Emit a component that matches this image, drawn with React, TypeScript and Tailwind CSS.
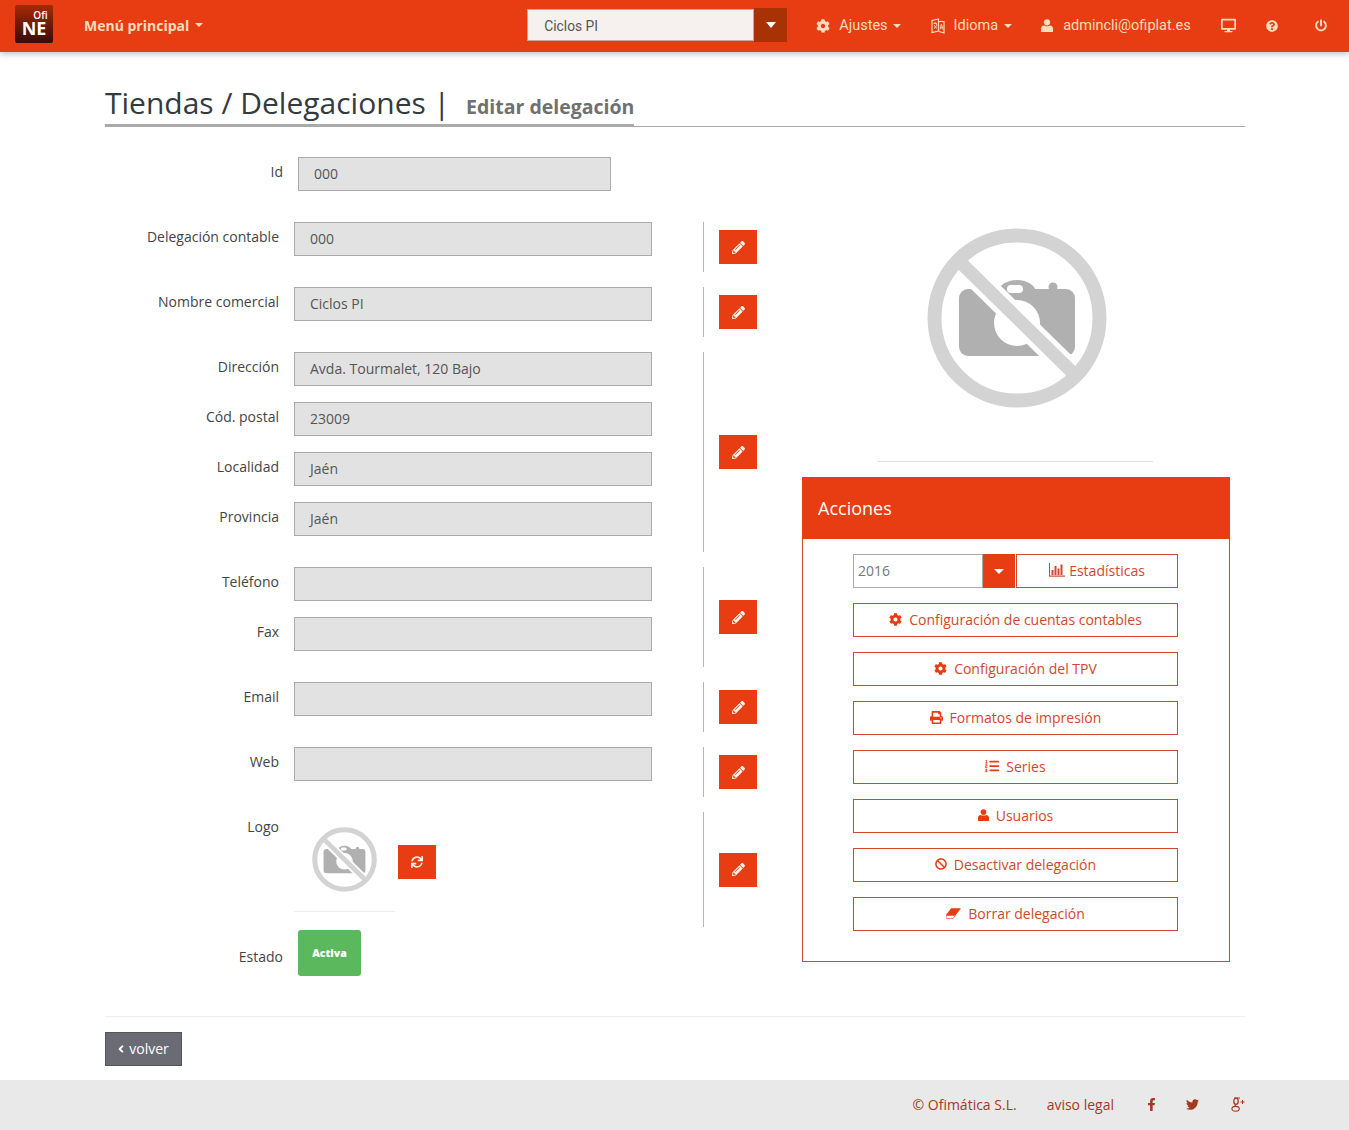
import React from 'react';
import {
  FaAngleLeft,
  FaBan,
  FaCog,
  FaDesktop,
  FaFacebookF,
  FaListOl,
  FaPencilAlt,
  FaPowerOff,
  FaPrint,
  FaQuestionCircle,
  FaSync,
  FaTwitter,
} from 'react-icons/fa';

// Imagen de "sin foto" usada en la ficha y en el logo
const NoPhoto = ({ className }: { className: string }) => (
  <svg viewBox="0 0 180 180" className={className}>
    <rect x="32" y="61" width="116" height="67" rx="9" fill="#b0b0b0" />
    <ellipse cx="90" cy="65" rx="19" ry="13" fill="#b0b0b0" />
    <circle cx="126" cy="59" r="4.5" fill="#b0b0b0" />
    <rect x="80" y="57" width="16" height="8" rx="4" fill="#ffffff" />
    <circle cx="90" cy="95" r="23" fill="#ffffff" />
    <line x1="32" y1="33" x2="147" y2="146" stroke="#ffffff" strokeWidth="23" />
    <line x1="32" y1="33" x2="147" y2="146" stroke="#d3d3d3" strokeWidth="13" />
    <circle cx="90" cy="90" r="82.5" fill="none" stroke="#d3d3d3" strokeWidth="14" />
  </svg>
);

const BarsIcon = () => (
  <svg viewBox="0 0 16 14" className="w-4 h-[14px]" fill="currentColor">
    <rect x="0" y="0" width="1" height="13" />
    <rect x="0" y="12.5" width="16" height="1.2" />
    <rect x="2.5" y="7" width="2" height="5" />
    <rect x="5.5" y="3" width="2" height="9" />
    <rect x="8.5" y="5.5" width="2" height="6.5" />
    <rect x="11.5" y="1.5" width="2" height="10.5" />
  </svg>
);

const UserIcon = ({ className }: { className: string }) => (
  <svg viewBox="0 0 12 13" className={className} fill="currentColor">
    <circle cx="6" cy="3.3" r="3.1" />
    <path d="M0 13V9.6C0 7.8 1.2 6.7 3 6.4C4 7.4 8 7.4 9 6.4C10.8 6.7 12 7.8 12 9.6V13Z" />
  </svg>
);

const EraserIcon = ({ className }: { className: string }) => (
  <svg viewBox="0 0 16 11" className={className} fill="currentColor">
    <path d="M5.5 0H16L10.5 7H0Z" />
    <path d="M0 7.6H10.2L7.4 11H1.2L0 10Z" fill="none" stroke="currentColor" strokeWidth="0.8" />
  </svg>
);

const LanguageIcon = ({ className }: { className: string }) => (
  <svg viewBox="0 0 14 16" className={className} fill="none" stroke="currentColor" strokeWidth="1.2">
    <path d="M1 2.5L7.5 1V13L1 14.5Z" />
    <path d="M7.5 3.5H13V15L8 13.5" />
    <path d="M2.5 5.5H6M4.2 4V6M3 10.5C4.5 9.5 5.5 8 5.8 6M3.2 7C3.8 8.5 4.8 9.8 6 10.4M9 11.5L10.4 6L12 11.5M9.6 9.8H11.4" strokeWidth="0.9" />
  </svg>
);

const GooglePlusIcon = ({ className }: { className: string }) => (
  <svg viewBox="0 0 15 15" className={className} fill="none" stroke="currentColor">
    <ellipse cx="5" cy="4.3" rx="2.2" ry="3.1" strokeWidth="1.3" />
    <ellipse cx="4.6" cy="11.8" rx="3.7" ry="2.4" strokeWidth="1.1" />
    <path d="M4 7.4C3.6 8.4 4.4 8.8 5 9.4M3 1H9" strokeWidth="1.1" />
    <path d="M11.5 3V7M9.5 5H13.5" strokeWidth="1" />
  </svg>
);

const Caret = ({ className }: { className: string }) => (
  <span className={`inline-block w-0 h-0 border-x-[4px] border-x-transparent border-t-[4px] ${className}`} />
);

const EditButton = () => (
  <button className="w-[38px] h-[34px] bg-[#e83c12] flex items-center justify-center text-[#fdf3ea]">
    <FaPencilAlt className="w-[13px] h-[13px]" />
  </button>
);

const Field = ({ label, value = '' }: { label: string; value?: string }) => (
  <div className="flex h-[50px]">
    <label className="w-[174px] text-right pt-[5px] leading-5">{label}</label>
    <div className="ml-[15px] w-[358px] h-[34px] bg-[#e2e2e2] border border-[#aaaaaa] px-[15px] leading-[32px] text-[#555555]">
      {value}
    </div>
  </div>
);

const FieldGroup = ({ children }: { children: React.ReactNode }) => (
  <div className="flex mb-[15px]">
    <div className="w-[598px]">{children}</div>
    <div className="border-l border-[#b5b5b5] pl-[15px] flex items-center">
      <EditButton />
    </div>
  </div>
);

const ActionButton = ({ icon, text }: { icon: React.ReactNode; text: string }) => (
  <button className="w-[325px] h-[34px] mb-[15px] pb-[2px] border border-[#cf4a28] text-[#d2482a] flex items-center justify-center gap-[7px]">
    {icon}
    <span>{text}</span>
  </button>
);

const App = () => {
  return (
    <div className="min-h-[1130px] bg-white flex flex-col font-['Open_Sans',sans-serif] text-[14px] text-[#444444]">
      {/* Barra superior */}
      <header className="h-[52px] bg-[#e83c12] shadow-[0_2px_6px_rgba(0,0,0,0.25)] flex items-center relative z-10">
        <div className="ml-[15px] mb-[4px] w-[38px] h-[38px] rounded-[2px] bg-gradient-to-b from-[#a82a08] to-[#3a0c03] text-white flex flex-col items-center">
          <span className="text-[10px] font-semibold ml-[13px] mt-[6px] leading-[9px]">Ofi</span>
          <span className="text-[18px] font-bold leading-[15px] mt-[1px]">NE</span>
        </div>
        <div className="ml-[31px] mb-[2px] flex items-center gap-[6px] font-bold text-[#ffdcbc]">
          <span>Menú principal</span>
          <Caret className="border-t-[#ffdcbc]" />
        </div>
        <div className="ml-[324px] mb-[2px] flex font-['Roboto',sans-serif] text-[14.5px]">
          <div className="w-[227px] h-[32px] mt-px bg-[#f6f1ef] border border-[#c9a99c] pl-[16px] leading-[32px] text-[13.8px] text-[#555555]">
            Ciclos PI
          </div>
          <div className="w-[33px] h-[34px] bg-[#a93205] flex items-center justify-center">
            <span className="w-0 h-0 border-x-[5px] border-x-transparent border-t-[6px] border-t-white" />
          </div>
        </div>
        <nav className="flex items-center mb-[1px] font-['Roboto',sans-serif] text-[14.5px] text-[#ffdcbc]">
          <FaCog className="ml-[29px] w-[14px] h-[14px]" />
          <span className="ml-[9px]">Ajustes</span>
          <Caret className="ml-[5px] border-t-[#ffdcbc]" />
          <LanguageIcon className="ml-[30px] w-[14px] h-[16px]" />
          <span className="ml-[9px]">Idioma</span>
          <Caret className="ml-[6px] border-t-[#ffdcbc]" />
          <UserIcon className="ml-[29px] w-[12px] h-[13px]" />
          <span className="ml-[10px]">admincli@ofiplat.es</span>
          <FaDesktop className="ml-[30px] w-[15px] h-[15px]" />
          <FaQuestionCircle className="ml-[30px] w-[12px] h-[12px]" />
          <FaPowerOff className="ml-[37px] w-[12px] h-[13px]" />
        </nav>
      </header>

      <main className="flex-1 ml-[105px] w-[1140px]">
        {/* Título */}
        <div className="mt-[30px] border-b border-[#aaaaaa] h-[45px]">
          <div className="inline-flex items-baseline h-[45px] border-b-[3px] border-[#aaaaaa] text-[#333a40]">
            <h1 className="text-[30px] leading-[41px]">Tiendas / Delegaciones |</h1>
            <h2 className="ml-[16px] text-[19.5px] font-bold text-[#707070]">Editar delegación</h2>
          </div>
        </div>

        <div className="flex">
          {/* Formulario */}
          <div className="w-[697px] pt-[30px]">
            <div className="flex h-[65px]">
              <label className="w-[178px] text-right pt-[5px] leading-5">Id</label>
              <div className="ml-[15px] w-[313px] h-[34px] bg-[#e2e2e2] border border-[#aaaaaa] px-[15px] leading-[32px] text-[#555555]">
                000
              </div>
            </div>
            <FieldGroup>
              <Field label="Delegación contable" value="000" />
            </FieldGroup>
            <FieldGroup>
              <Field label="Nombre comercial" value="Ciclos PI" />
            </FieldGroup>
            <FieldGroup>
              <Field label="Dirección" value="Avda. Tourmalet, 120 Bajo" />
              <Field label="Cód. postal" value="23009" />
              <Field label="Localidad" value="Jaén" />
              <Field label="Provincia" value="Jaén" />
            </FieldGroup>
            <FieldGroup>
              <Field label="Teléfono" />
              <Field label="Fax" />
            </FieldGroup>
            <FieldGroup>
              <Field label="Email" />
            </FieldGroup>
            <FieldGroup>
              <Field label="Web" />
            </FieldGroup>
            <div className="flex h-[115px]">
              <div className="w-[598px] flex">
                <label className="w-[174px] text-right pt-[5px] leading-5">Logo</label>
                <div className="ml-[15px] w-[101px] h-[100px] border-b border-[#eeeeee] pl-[18px] pt-[15px]">
                  <NoPhoto className="w-[65px] h-[65px]" />
                </div>
                <button className="ml-[3px] mt-[33px] w-[38px] h-[34px] bg-[#e83c12] flex items-center justify-center text-[#fdf3ea]">
                  <FaSync className="w-[12px] h-[12px]" />
                </button>
              </div>
              <div className="border-l border-[#b5b5b5] pl-[15px] flex items-center">
                <EditButton />
              </div>
            </div>
            <div className="flex mt-[3px] h-[46px]">
              <label className="w-[178px] text-right self-end pb-[9px] leading-5">Estado</label>
              <div className="ml-[15px] w-[63px] h-[46px] pt-[2px] rounded-[3px] bg-[#5cb85c] text-white text-[10.5px] font-extrabold flex items-center justify-center">
                Activa
              </div>
            </div>
          </div>

          {/* Foto y acciones */}
          <div className="w-[428px] pt-[101px]">
            <NoPhoto className="w-[180px] h-[180px] ml-[125px]" />
            <div className="mt-[53px] ml-[76px] w-[275px] border-t border-[#dddddd]" />
            <div className="mt-[15px] border border-[#cf4a28] h-[485px]">
              <div className="h-[62px] -mt-px -mx-px bg-[#e83c12] text-white text-[18px] flex items-center pl-[16px]">
                Acciones
              </div>
              <div className="pt-[15px] pl-[50px]">
                <div className="flex h-[34px] mb-[15px]">
                  <div className="w-[130px] border border-[#aaaaaa] pl-[4px] leading-[32px] text-[#777777]">2016</div>
                  <div className="w-[32px] bg-[#e83c12] flex items-center justify-center">
                    <span className="w-0 h-0 border-x-[5px] border-x-transparent border-t-[5px] border-t-white" />
                  </div>
                  <button className="ml-px w-[162px] pb-[2px] border border-[#cf4a28] text-[#d2482a] flex items-center justify-center gap-[4px]">
                    <BarsIcon />
                    <span>Estadísticas</span>
                  </button>
                </div>
                <ActionButton icon={<FaCog className="w-[13px] h-[13px] text-[#e83c12]" />} text="Configuración de cuentas contables" />
                <ActionButton icon={<FaCog className="w-[13px] h-[13px] text-[#e83c12]" />} text="Configuración del TPV" />
                <ActionButton icon={<FaPrint className="w-[13px] h-[13px] text-[#e83c12]" />} text="Formatos de impresión" />
                <ActionButton icon={<FaListOl className="w-[14px] h-[14px] text-[#e83c12]" />} text="Series" />
                <ActionButton icon={<UserIcon className="w-[11px] h-[12px] text-[#e83c12]" />} text="Usuarios" />
                <ActionButton icon={<FaBan className="w-[12px] h-[12px] text-[#e83c12]" />} text="Desactivar delegación" />
                <ActionButton icon={<EraserIcon className="w-[15px] h-[11px] text-[#e83c12]" />} text="Borrar delegación" />
              </div>
            </div>
          </div>
        </div>

        <div className="mt-[40px] border-t border-[#eeeeee] pt-[15px]">
          <button className="w-[77px] h-[34px] pb-[2px] pr-[2px] bg-[#6b6b75] border border-[#555555] text-white flex items-center justify-center gap-[3px]">
            <FaAngleLeft className="w-[10px] h-[12px] mt-[2px]" />
            <span>volver</span>
          </button>
        </div>
      </main>

      {/* Pie */}
      <footer className="h-[50px] pb-[2px] bg-[#e9e9e9] flex items-center justify-end pr-[103px] text-[#a5391c]">
        <span>© Ofimática S.L.</span>
        <span className="ml-[30px]">aviso legal</span>
        <FaFacebookF className="ml-[32px] w-[11px] h-[13px]" />
        <FaTwitter className="ml-[29px] w-[13px] h-[13px]" />
        <GooglePlusIcon className="ml-[32px] w-[15px] h-[15px]" />
      </footer>
    </div>
  );
};

export default App;
